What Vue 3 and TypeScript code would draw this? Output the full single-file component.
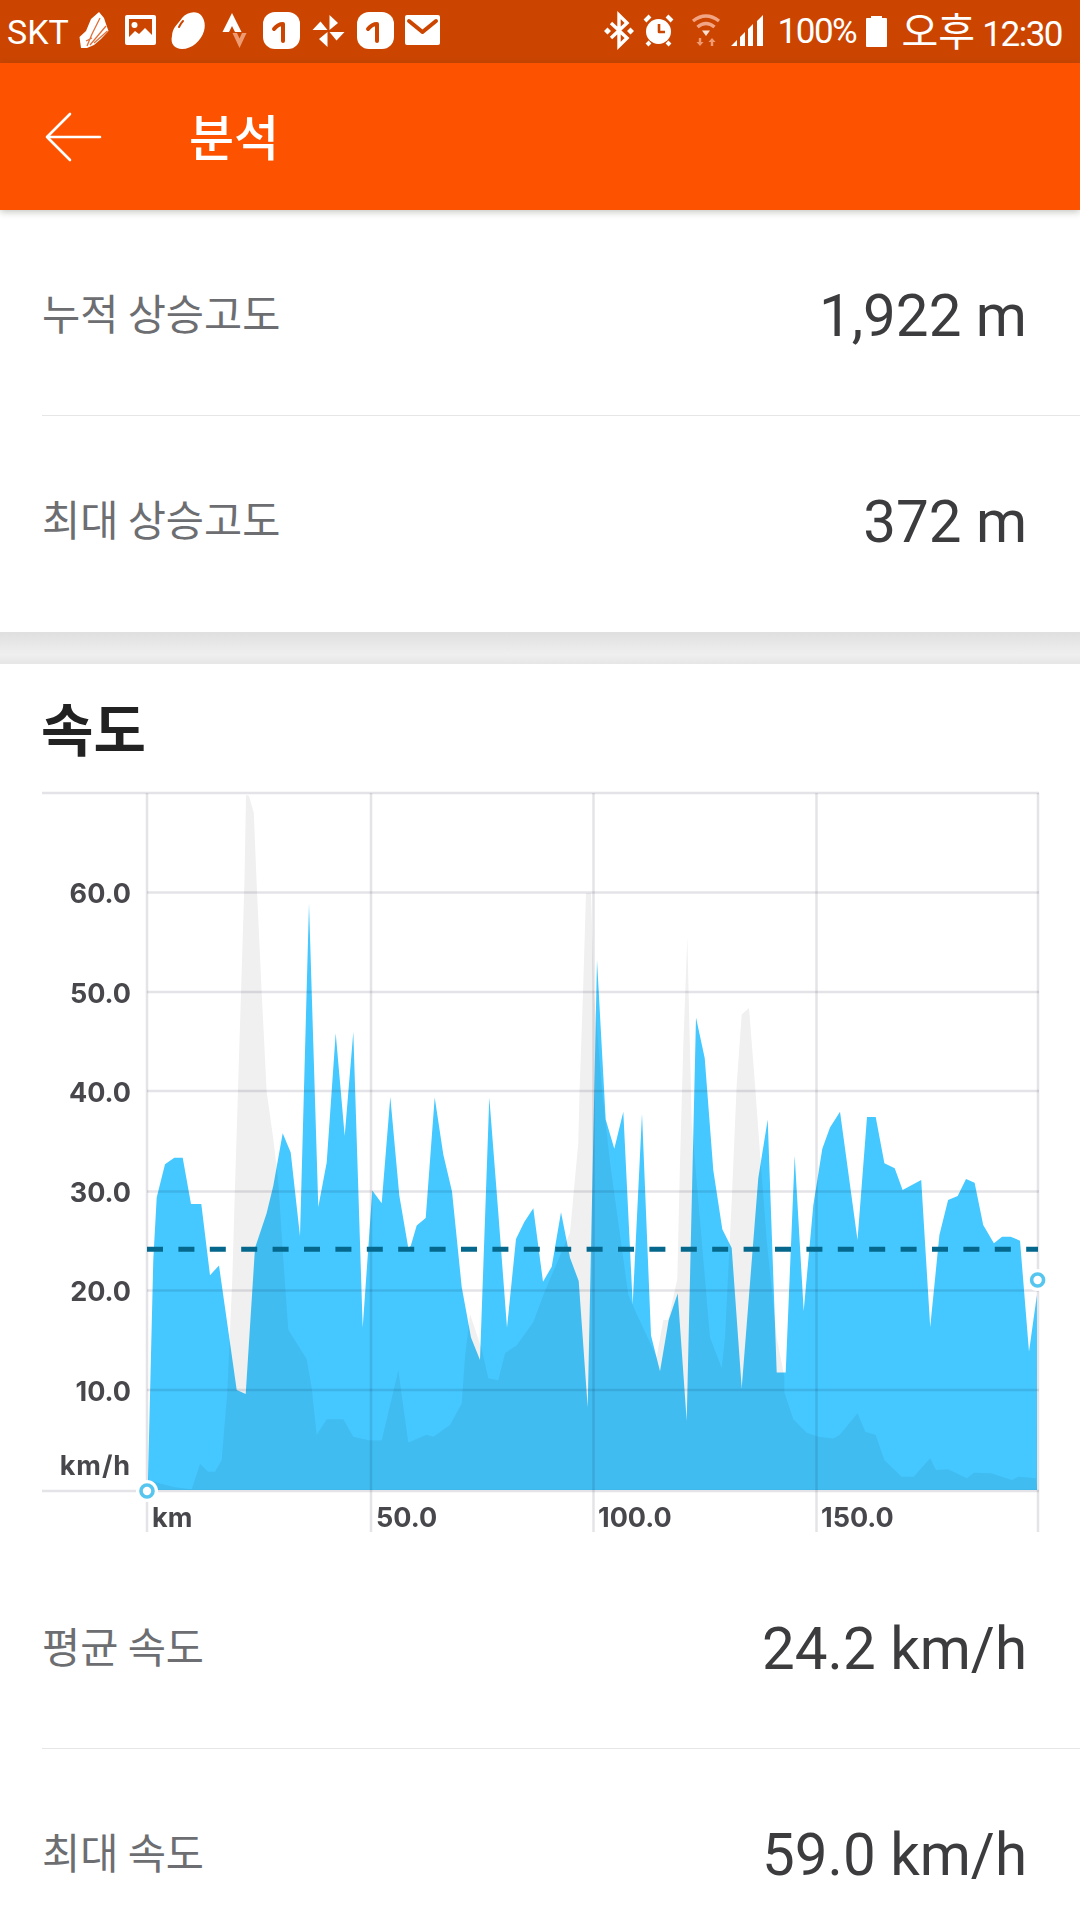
<script setup lang="ts">
type Pt = [number, number]

const z = (x0: number, pts: Pt[]): Pt[] => pts.map(([x, y]) => [x0 + x / 3, 890 + y / 2.57] as Pt)
const z6 = (pts: Pt[]): Pt[] => pts.map(([x, y]) => [540 + x / 2.904, 1130 + y / 3] as Pt)

const toPoints = (pts: Pt[]) => pts.map(([x, y]) => `${x.toFixed(1)},${y.toFixed(1)}`).join(' ')

const speed: Pt[] = [
  [148, 1490],
  ...z(140, [[24, 1510], [30, 1300], [40, 950], [50, 790], [75, 705], [103, 688], [128, 688], [153, 807], [184, 807], [210, 990], [237, 965], [290, 1285], [317, 1295], [345, 920], [380, 830], [400, 760], [428, 625], [452, 675], [480, 890], [507, 35], [535, 815], [560, 700], [587, 368], [614, 632], [640, 365], [668, 1125]]),
  ...z(370, [[7, 772], [35, 805], [61, 532], [88, 785], [115, 920], [122, 915], [140, 862], [167, 843], [194, 533], [220, 680], [246, 775], [275, 1020], [303, 1150], [330, 1208], [358, 533], [385, 830], [411, 1125], [438, 897], [463, 853], [490, 818], [519, 1007], [545, 968], [573, 828], [600, 945], [626, 1005], [653, 1330], [681, 180], [707, 590]]),
  ...z(600, [[17, 590], [43, 665], [70, 570], [98, 1065], [126, 575], [153, 1145], [180, 1237], [206, 1105], [233, 1037], [260, 1365], [288, 328], [314, 432], [340, 720], [367, 872], [395, 920], [425, 1280], [475, 740], [503, 590], [530, 1240], [557, 1240], [584, 683], [611, 1082], [640, 810], [667, 665], [690, 610], [720, 570]]),
  [857.5, 1240], [867, 1117], [875.7, 1117],
  ...z6([[1000, 100], [1030, 115], [1053, 180], [1107, 150], [1133, 592], [1160, 315], [1185, 210], [1213, 198], [1237, 147], [1262, 158], [1287, 285], [1318, 340], [1342, 320], [1367, 320], [1394, 332], [1420, 665], [1443, 495]]),
  [1037, 1490],
]

const elevation: Pt[] = [
  [148, 1490],
  ...z(140, [[24, 1515], [60, 1525], [105, 1535], [155, 1540], [180, 1475], [205, 1495], [225, 1495], [245, 1465], [262, 1290], [277, 1000], [285, 760]]),
  [238, 1090], [241, 993], [244.5, 880], [246, 795], [249, 796], [253.8, 813], [256.5, 880], [261.7, 993], [266.7, 1092],
  ...z(140, [[400, 640], [415, 750], [430, 950], [445, 1130], [500, 1205], [515, 1280], [530, 1400], [560, 1360], [610, 1360], [640, 1405], [690, 1415]]),
  ...z(370, [[35, 1415], [85, 1235], [115, 1420], [170, 1400], [190, 1405], [240, 1375], [275, 1320], [285, 1200], [300, 1090], [335, 1180], [355, 1255], [385, 1260], [405, 1190], [440, 1170], [490, 1110], [525, 1030], [600, 880], [625, 650]]),
  [579.6, 1090], [583, 993], [586, 893], [591, 893], [594, 993], [602, 1090],
  ...z(600, [[30, 700], [85, 1040], [110, 1090], [170, 1200], [190, 1105], [205, 1105], [232, 1000], [240, 700], [250, 400], [262, 120], [275, 600], [305, 900], [330, 1150], [365, 1228], [375, 1150], [395, 800], [410, 500], [425, 320], [447, 303], [465, 500], [482, 700], [500, 900], [530, 1150], [553, 1250], [553, 1290], [580, 1360], [620, 1395], [655, 1405], [700, 1410]]),
  ...z6([[870, 915], [922, 850], [945, 905], [975, 915], [1000, 990], [1050, 1040], [1085, 1040], [1133, 985], [1150, 1020], [1185, 1018], [1240, 1045], [1260, 1028], [1310, 1030], [1370, 1050], [1390, 1040], [1440, 1045]]),
  [1037, 1490],
]

const speedPoints = toPoints(speed)
const elevationPoints = toPoints(elevation)

const hLines = [
  { y: 793, x1: 42 },
  { y: 892.6, x1: 147 },
  { y: 992, x1: 147 },
  { y: 1091, x1: 147 },
  { y: 1191.5, x1: 147 },
  { y: 1290.6, x1: 147 },
  { y: 1390, x1: 147 },
  { y: 1491, x1: 42 },
]
const vLines = [147, 371, 593.5, 816.5, 1038]
const yLabels = [
  { t: '60.0', y: 903 },
  { t: '50.0', y: 1002.5 },
  { t: '40.0', y: 1101.5 },
  { t: '30.0', y: 1202 },
  { t: '20.0', y: 1301 },
  { t: '10.0', y: 1400.5 },
  { t: 'km/h', y: 1475 },
]
const xLabels = [
  { t: 'km', x: 152 },
  { t: '50.0', x: 376 },
  { t: '100.0', x: 598 },
  { t: '150.0', x: 821 },
]
const blades = [0, 90, 180, 270]
</script>

<template>
  <div class="phone">
    <div class="status">
      <span class="carrier">SKT</span>
      <svg class="strip-left" viewBox="75 0 370 63" width="370" height="63" aria-hidden="true">
        <path class="w" d="M81 48 L79.5 37 L86 31 L91 19 L99 12 L104 18 L106 24 L108.5 31 L101 39 L94 45 L87 48Z" />
        <path class="shoe-lines" d="M87 46 L92 34 L100 18 M90 45 L106 26 M94 43 L107.5 31 M86 41 L92 38" />
        <rect class="w" x="125" y="15" width="31" height="30" rx="2" />
        <rect class="d" x="129" y="19" width="23" height="19" />
        <circle class="w" cx="134.5" cy="25" r="3" />
        <path class="w" d="M128 38 L135 31 L139 34 L145 28 L153 36 V42 H128Z" />
        <path class="w" d="M172 36 C172 28 178 24 182 18 C186 13 193 11 198 13 C204 16 206 24 204 31 C201 41 192 49 182 49 C175 49 170 44 172 36Z" />
        <path class="cut thin" d="M183 21 C181 23 180 25 179 27" />
        <path class="w" d="M232 13 L222.5 32 L229 32 L232 26 L235 32 L241.5 32Z" />
        <path class="tint" d="M232.5 33 L239.5 48 L246.5 33 L242 33 L239.5 38.5 L237 33Z" />
        <rect class="w" x="263" y="12" width="37" height="37" rx="12" />
        <path class="cut" d="M274 29 Q278 24 283 24 V41" />
        <g v-for="a in blades" :key="a" :transform="`rotate(${a} 328.5 31)`">
          <path class="w" d="M329.5 30 V15 L338 23 L329.5 30Z" />
        </g>
        <rect class="w" x="357" y="12" width="37" height="37" rx="12" />
        <path class="cut" d="M368 29 Q372 24 377 24 V41" />
        <rect class="w" x="405" y="15" width="35" height="30" rx="2" />
        <path class="cut" d="M409 21 L422.5 32 L436 21" />
      </svg>
      <div class="status-right">
        <svg class="strip-right" viewBox="600 0 168 63" width="168" height="63" aria-hidden="true">
          <path class="bt" d="M612 23 L628 38 L620 46 V15 L628 23 L612 38" />
          <path class="w" d="M605 31 L608.5 27.5 L612 31 L608.5 34.5Z M628 31 L631.5 27.5 L635 31 L631.5 34.5Z" />
          <circle class="w" cx="659.5" cy="31.5" r="12.5" />
          <path class="cut thin2" d="M660 24 V32 H666" />
          <path class="alarm" d="M646 21 L651 16 M673 21 L668 16 M648 45 L651 42 M671 45 L668 42" />
          <path class="wifi" d="M694 21 Q707 11 720 21 M698.5 27 Q707 20 715.5 27" />
          <path class="wifi-in" d="M703 30.5 H711 L707 36Z" />
          <path class="tint" d="M701 46 L697.5 42 H699.8 V38 H702.2 V42 H704.5Z M713 38 L716.5 42 H714.2 V46 H711.8 V42 H709.5Z" />
          <path class="w" d="M732 46 L738 40 V46Z M741 46 V37 L746 32 V46Z M749 46 V29 L754 24 V46Z M758 46 V21 L764 15 V46Z" />
        </svg>
        <span class="pct">100%</span>
        <svg class="battery" viewBox="0 0 21 31" width="21" height="31" aria-hidden="true">
          <path class="w" d="M5 0 H16 V2 H20 Q21 2 21 3 V30 Q21 31 20 31 H1 Q0 31 0 30 V3 Q0 2 1 2 H5Z" />
        </svg>
        <span class="clock"><span class="ampm">오후</span> 12:30</span>
      </div>
    </div>

    <header class="appbar">
      <svg class="back" viewBox="0 0 58 50" width="58" height="50" aria-hidden="true">
        <path d="M56 25 H3 M26 2 L3 25 L26 48" />
      </svg>
      <h1 class="title">분석</h1>
    </header>

    <section>
      <div class="row">
        <span class="label">누적 상승고도</span>
        <span class="value">1,922 m</span>
      </div>
      <div class="row last">
        <span class="label">최대 상승고도</span>
        <span class="value">372 m</span>
      </div>
    </section>

    <div class="band"></div>

    <section>
      <h2 class="heading">속도</h2>
      <svg class="chart" viewBox="0 780 1080 763" width="1080" height="763">
        <polygon class="speed" :points="speedPoints" />
        <polygon class="elev" :points="elevationPoints" />
        <line v-for="l in hLines" :key="l.y" class="grid" :x1="l.x1" :x2="1039" :y1="l.y" :y2="l.y" />
        <line v-for="x in vLines" :key="x" class="grid" :x1="x" :x2="x" :y1="793" :y2="1532" />
        <line class="avg" x1="147" x2="1038" y1="1249.3" y2="1249.3" />
        <text v-for="l in yLabels" :key="l.t" class="axis" :class="{ unit: l.t === 'km/h' }" x="131" :y="l.y" text-anchor="end">{{ l.t }}</text>
        <text v-for="l in xLabels" :key="l.t" class="axis" :x="l.x" y="1527">{{ l.t }}</text>
        <circle class="halo" cx="147" cy="1491" r="11" />
        <circle class="dot" cx="147" cy="1491" r="6" />
        <circle class="halo" cx="1037.6" cy="1280" r="11" />
        <circle class="dot" cx="1037.6" cy="1280" r="6" />
      </svg>
      <div class="row">
        <span class="label">평균 속도</span>
        <span class="value">24.2 km/h</span>
      </div>
      <div class="row">
        <span class="label">최대 속도</span>
        <span class="value">59.0 km/h</span>
      </div>
    </section>
  </div>
</template>

<style scoped>
.phone {
  width: 1080px;
  height: 1920px;
  overflow: hidden;
  background: #fff;
  font-family: Roboto, "Noto Sans CJK KR", sans-serif;
}

.status {
  height: 63px;
  background: #cb4500;
  display: flex;
  align-items: center;
  color: #fff;
  font-size: 35px;
  letter-spacing: -1.5px;
  padding: 0 18px 0 7px;
  box-sizing: border-box;
}
.carrier {
  width: 68px;
  flex: none;
  font-size: 34px;
  letter-spacing: 0;
}
.status-right {
  margin-left: auto;
  display: flex;
  align-items: center;
}
.pct {
  margin-left: 11px;
  width: 88px;
  line-height: 40px;
}
.battery {
  flex: none;
}
.clock {
  margin-left: 15px;
  white-space: nowrap;
  line-height: 40px;
}
.ampm {
  font-size: 40px;
  line-height: 40px;
  letter-spacing: 0;
  font-family: "Noto Sans CJK KR", sans-serif;
}
.strip-left,
.strip-right {
  flex: none;
}
.w {
  fill: #fff;
}
.d {
  fill: #cb4500;
}
.cut {
  fill: none;
  stroke: #cb4500;
  stroke-width: 4;
  stroke-linecap: round;
  stroke-linejoin: round;
}
.cut.thin {
  stroke-width: 2;
}
.cut.thin2 {
  stroke-width: 2.6;
  stroke-linecap: butt;
}
.shoe-lines {
  fill: none;
  stroke: #e0703a;
  stroke-width: 1.3;
}
.tint {
  fill: #ee9b72;
}
.bt {
  fill: none;
  stroke: #fff;
  stroke-width: 3.4;
  stroke-linejoin: miter;
}
.alarm {
  fill: none;
  stroke: #fff;
  stroke-width: 4;
}
.wifi {
  fill: none;
  stroke: #f2a585;
  stroke-width: 3.4;
}
.wifi-in {
  fill: #fbe0d2;
}

.appbar {
  height: 147px;
  background: #fd5300;
  display: flex;
  align-items: center;
  padding-left: 44px;
  box-shadow: 0 2px 7px rgba(60, 60, 50, 0.3);
  position: relative;
}
.back {
  flex: none;
  fill: none;
  stroke: #fff;
  stroke-width: 2.6;
}
.back path {
  stroke-linecap: round;
  stroke-linejoin: round;
}
.title {
  margin: 0 0 5px 87px;
  font-size: 49px;
  font-weight: 500;
  color: #fff;
  font-family: "Noto Sans CJK KR", sans-serif;
}

.row {
  height: 206px;
  box-sizing: border-box;
  margin-left: 42px;
  padding: 6px 53px 0 0;
  border-bottom: 1px solid #e6e6e6;
  display: flex;
  align-items: center;
  justify-content: space-between;
}
.row.last {
  border-bottom: none;
  height: 216px;
  padding-bottom: 10px;
}
.label {
  font-size: 41.5px;
  color: #6d6e71;
  font-family: "Noto Sans CJK KR", sans-serif;
  margin-bottom: 8px;
}
.value {
  font-size: 58.3px;
  color: #3c3c3f;
  line-height: 68px;
}

.band {
  height: 32px;
  background: linear-gradient(#dfdfdf, #efefef 70%, #e6e6e6);
}

.heading {
  margin: 0;
  height: 116px;
  box-sizing: border-box;
  padding: 28px 0 0 41px;
  font-size: 57px;
  line-height: 68px;
  font-weight: 700;
  color: #222;
  font-family: "Noto Sans CJK KR", sans-serif;
}

.chart {
  display: block;
  isolation: isolate;
}
.speed {
  fill: #44c8ff;
}
.elev {
  fill: #f0f0f0;
  mix-blend-mode: multiply;
}
.grid {
  stroke: #e4e4e8;
  stroke-width: 2.5;
  mix-blend-mode: multiply;
}
.avg {
  stroke: #04678b;
  stroke-width: 5;
  stroke-dasharray: 16 15.4;
}
.axis {
  font-family: Inter, sans-serif;
  font-size: 27px;
  font-weight: 700;
  fill: #47474c;
}
.axis.unit {
  letter-spacing: 0.9px;
}
.halo {
  fill: #fff;
}
.dot {
  fill: #fff;
  stroke: #56c6ee;
  stroke-width: 3.6;
}
</style>

<style>
html,
body {
  margin: 0;
  background: #fff;
}
</style>
